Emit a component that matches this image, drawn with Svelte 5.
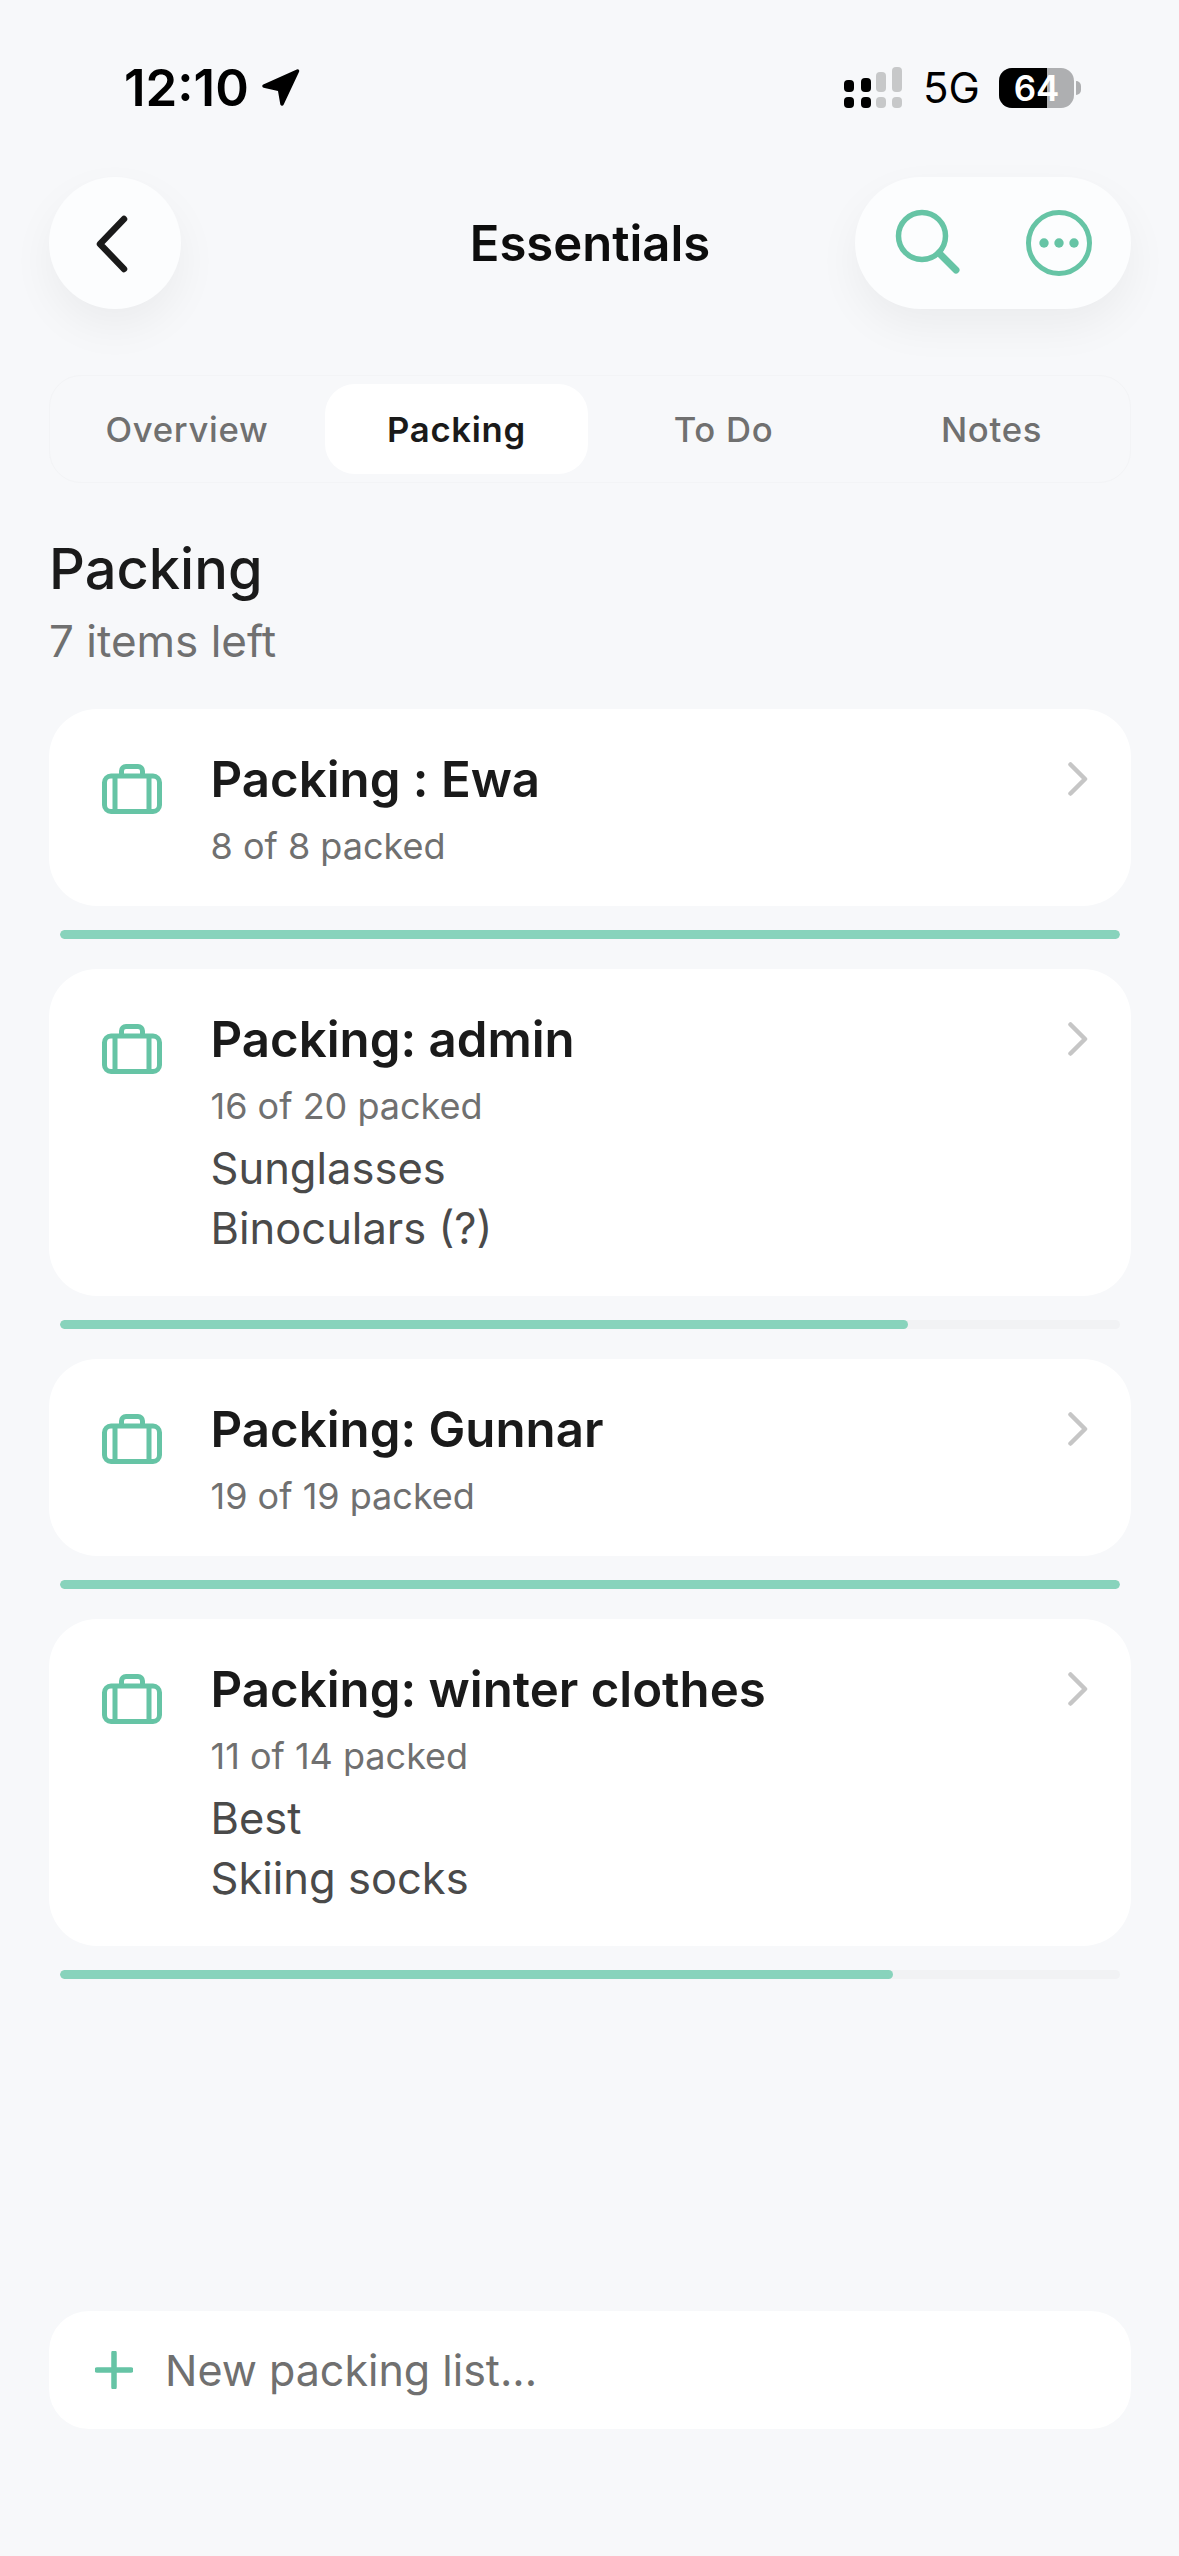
<script>
  const tabs = ["Overview", "Packing", "To Do", "Notes"];
  const lists = [
    { title: "Packing : Ewa", done: 8, total: 8, left: [] },
    { title: "Packing: admin", done: 16, total: 20, left: ["Sunglasses", "Binoculars (?)"] },
    { title: "Packing: Gunnar", done: 19, total: 19, left: [] },
    { title: "Packing: winter clothes", done: 11, total: 14, left: ["Best", "Skiing socks"] }
  ];
</script>

<div class="page">
  <div class="status">
    <div class="clock">
      <span>12:10</span>
      <svg width="40" height="40" viewBox="0 0 40 40">
        <path d="M3 18 36.500 3 21 36 18.500 21.500z" fill="#000" stroke="#000" stroke-width="3.500" stroke-linejoin="round" />
      </svg>
    </div>
    <div class="sys">
      <svg class="signal" width="60" height="42" viewBox="0 0 60 42">
        <rect x="0" y="13" width="10" height="12" rx="4" fill="#000" />
        <rect x="17" y="11" width="10" height="14" rx="4" fill="#000" />
        <rect x="32" y="5" width="10" height="20" rx="4" fill="#c7c8c9" />
        <rect x="48" y="0" width="10" height="25" rx="4" fill="#c7c8c9" />
        <rect x="0" y="30" width="10" height="11" rx="4" fill="#000" />
        <rect x="17" y="30" width="10" height="11" rx="4" fill="#000" />
        <rect x="32" y="30" width="10" height="11" rx="4" fill="#c7c8c9" />
        <rect x="48" y="30" width="10" height="11" rx="4" fill="#c7c8c9" />
      </svg>
      <span class="net">5G</span>
      <div class="battery">
        <div class="cell"><div class="fill"></div><span>64</span></div>
        <div class="nub"></div>
      </div>
    </div>
  </div>

  <header class="nav">
    <button class="round" aria-label="Back">
      <svg width="36" height="60" viewBox="0 0 36 60">
        <path d="M30 6 6 31l24 25" fill="none" stroke="#1a1a1a" stroke-width="6.500" stroke-linecap="round" stroke-linejoin="round" />
      </svg>
    </button>
    <h1>Essentials</h1>
    <div class="actions">
      <svg width="68" height="68" viewBox="0 0 68 68">
        <circle cx="27" cy="27" r="23.500" fill="none" stroke="#66c4a5" stroke-width="5.500" />
        <path d="M44 44 61 61" stroke="#66c4a5" stroke-width="7" stroke-linecap="round" />
      </svg>
      <svg width="66" height="66" viewBox="0 0 66 66">
        <circle cx="33" cy="33" r="30.500" fill="none" stroke="#66c4a5" stroke-width="5" />
        <circle cx="18" cy="33" r="4.700" fill="#66c4a5" />
        <circle cx="33" cy="33" r="4.700" fill="#66c4a5" />
        <circle cx="48" cy="33" r="4.700" fill="#66c4a5" />
      </svg>
    </div>
  </header>

  <nav class="tabs">
    {#each tabs as tab}
      <div class="tab" class:active={tab === "Packing"}>{tab}</div>
    {/each}
  </nav>

  <h2>Packing</h2>
  <p class="left">7 items left</p>

  <div class="lists">
    {#each lists as list}
      <section>
        <div class="card">
          <svg class="case" width="60" height="50" viewBox="0 0 60 50">
            <rect x="2.500" y="12" width="55" height="35.500" rx="6.500" fill="none" stroke="#66c4a5" stroke-width="5" />
            <path d="M19.500 12V7a4.500 4.500 0 0 1 4.500-4.500h12A4.500 4.500 0 0 1 40.500 7v5M13 12v35M47 12v35" fill="none" stroke="#66c4a5" stroke-width="5" />
          </svg>
          <div class="body">
            <h3>{list.title}</h3>
            <div class="count">{list.done} of {list.total} packed</div>
            {#each list.left as item}
              <div class="item">{item}</div>
            {/each}
          </div>
          <svg class="chev" width="20" height="34" viewBox="0 0 20 34">
            <path d="M2.500 2.500 17 17 2.500 31.500" fill="none" stroke="#c6c6c6" stroke-width="4.500" stroke-linecap="round" stroke-linejoin="round" />
          </svg>
        </div>
        <div class="track">
          <div class="bar" style="width: {(list.done / list.total) * 100}%"></div>
        </div>
      </section>
    {/each}
  </div>

  <div class="composer">
    <svg width="38" height="38" viewBox="0 0 38 38">
      <path d="M19 2v34M2 19h34" stroke="#66c4a5" stroke-width="5.500" stroke-linecap="round" />
    </svg>
    <span>New packing list...</span>
  </div>
</div>

<style>
  :global(body) {
    background: #f7f8fa;
    font-family: Inter, "Noto Sans", sans-serif;
  }

  .page {
    box-sizing: border-box;
    height: 2556px;
    padding: 67px 48px 127px 49px;
    display: flex;
    flex-direction: column;
    background: #f7f8fa;
    color: #1a1a1a;
    overflow: hidden;
  }

  .status {
    height: 42px;
    display: flex;
    justify-content: space-between;
    align-items: center;
    color: #000;
  }

  .clock {
    margin-left: 75px;
    display: flex;
    align-items: center;
    gap: 12px;
    font-size: 51px;
    font-weight: 600;
    line-height: 42px;
  }

  .sys {
    margin-right: 50px;
    display: flex;
    align-items: center;
  }

  .signal {
    margin-right: 19px;
  }

  .net {
    width: 76px;
    font-size: 42px;
    font-weight: 400;
    line-height: 42px;
  }

  .battery {
    display: flex;
    align-items: center;
    gap: 2px;
  }

  .cell {
    position: relative;
    width: 75px;
    height: 40px;
    border-radius: 13px;
    overflow: hidden;
    background: #aeafb1;
    display: flex;
    align-items: center;
    justify-content: center;
    color: #fff;
    font-size: 35px;
    font-weight: 600;
    line-height: 1;
  }

  .cell span {
    position: relative;
  }

  .fill {
    position: absolute;
    left: 0;
    top: 0;
    bottom: 0;
    width: 64%;
    background: #000;
  }

  .nub {
    width: 5px;
    height: 14px;
    background: #aeafb1;
    border-radius: 0 7px 7px 0;
  }

  .nav {
    margin-top: 68px;
    height: 132px;
    display: grid;
    grid-template-columns: 1fr auto 1fr;
    align-items: center;
  }

  .round {
    width: 132px;
    height: 132px;
    padding: 0 6px 0 0;
    border: none;
    border-radius: 50%;
    background: #fcfdfe;
    box-shadow: 0 18px 44px rgba(0, 0, 0, 0.05);
    display: flex;
    align-items: center;
    justify-content: center;
  }

  h1 {
    margin: 0;
    font-size: 49px;
    font-weight: 600;
    color: #0d0d0d;
  }

  .actions {
    justify-self: end;
    width: 276px;
    height: 132px;
    box-sizing: border-box;
    padding: 0 39px 0 40px;
    border-radius: 66px;
    background: #fcfdfe;
    box-shadow: 0 18px 44px rgba(0, 0, 0, 0.05);
    display: flex;
    align-items: center;
    justify-content: space-between;
  }

  .tabs {
    margin-top: 66px;
    height: 108px;
    box-sizing: border-box;
    padding: 8px;
    border: 1px solid #f3f4f6;
    border-radius: 32px;
    display: grid;
    grid-template-columns: repeat(4, 1fr);
    gap: 4px;
  }

  .tab {
    border-radius: 30px;
    display: flex;
    align-items: center;
    justify-content: center;
    font-size: 34.700px;
    font-weight: 500;
    letter-spacing: 0.7px;
    color: #707070;
  }

  .tab:first-child {
    padding-right: 5px;
  }

  .tab:last-child {
    padding-left: 2px;
  }

  .tab.active {
    background: #fff;
    color: #1a1a1a;
    font-weight: 600;
  }

  h2 {
    margin: 50px 0 0;
    font-size: 56px;
    font-weight: 500;
    line-height: 72px;
  }

  .left {
    margin: 0;
    font-size: 44px;
    line-height: 72px;
    color: #707070;
  }

  .lists {
    margin-top: 32px;
    display: flex;
    flex-direction: column;
    gap: 30px;
  }

  .card {
    min-height: 197px;
    box-sizing: border-box;
    padding: 40px 43px 38px 53px;
    border-radius: 48px;
    background: #fff;
    display: flex;
    align-items: flex-start;
  }

  .case {
    flex: none;
    margin-top: 15px;
  }

  .body {
    flex: 1;
    margin-left: 48.500px;
  }

  .chev {
    margin-top: 13px;
  }

  h3 {
    margin: 0;
    font-size: 49.200px;
    font-weight: 600;
    line-height: 60px;
    font-feature-settings: "calt" 0;
  }

  .count {
    margin-top: 15px;
    font-size: 36px;
    line-height: 44px;
    color: #707070;
  }

  .item {
    font-size: 43.500px;
    line-height: 60px;
    color: #4a4a4a;
  }

  .count + .item {
    margin-top: 10px;
  }

  .track {
    height: 9px;
    margin: 24px 11px 0;
    border-radius: 5px;
    background: #f1f2f4;
    overflow: hidden;
  }

  .bar {
    height: 100%;
    border-radius: 5px;
    background: #88d3bc;
  }

  .composer {
    margin-top: auto;
    height: 118px;
    box-sizing: border-box;
    padding-left: 46px;
    border-radius: 40px;
    background: #fff;
    display: flex;
    align-items: center;
    gap: 32px;
    font-size: 43px;
    color: #707070;
  }
</style>
